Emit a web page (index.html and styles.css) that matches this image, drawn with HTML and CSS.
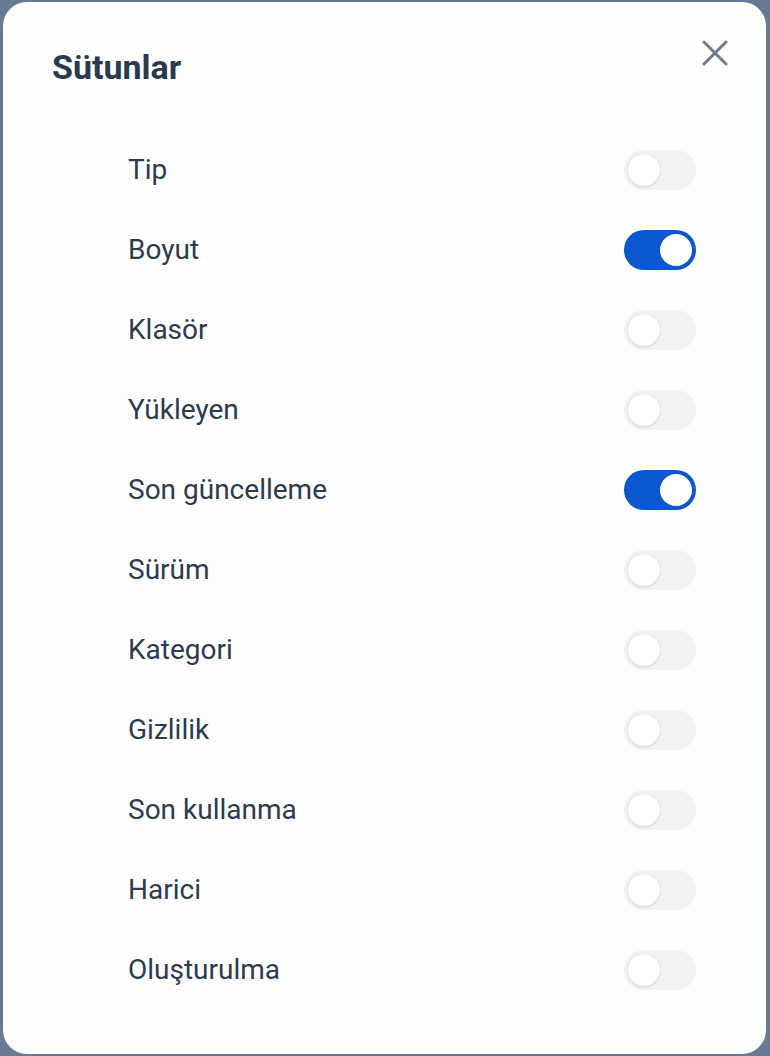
FILE: index.html
```html
<!DOCTYPE html>
<html lang="tr">
<head>
<meta charset="utf-8">
<link rel="stylesheet" href="styles.css">
</head>
<body>
<div class="modal">
  <div class="header">
    <h2 class="title">Sütunlar</h2>
    <button class="close" aria-label="Kapat">
      <svg width="26" height="26" viewBox="0 0 26 26"><path d="M2 2 L24 24 M24 2 L2 24" stroke="#6b7a90" stroke-width="3" stroke-linecap="round"/></svg>
    </button>
  </div>
  <ul class="list">
    <li class="row"><span class="label">Tip</span><span class="toggle"><span class="knob"></span></span></li>
    <li class="row"><span class="label">Boyut</span><span class="toggle on"><span class="knob"></span></span></li>
    <li class="row"><span class="label">Klasör</span><span class="toggle"><span class="knob"></span></span></li>
    <li class="row"><span class="label">Yükleyen</span><span class="toggle"><span class="knob"></span></span></li>
    <li class="row"><span class="label">Son güncelleme</span><span class="toggle on"><span class="knob"></span></span></li>
    <li class="row"><span class="label">Sürüm</span><span class="toggle"><span class="knob"></span></span></li>
    <li class="row"><span class="label">Kategori</span><span class="toggle"><span class="knob"></span></span></li>
    <li class="row"><span class="label">Gizlilik</span><span class="toggle"><span class="knob"></span></span></li>
    <li class="row"><span class="label">Son kullanma</span><span class="toggle"><span class="knob"></span></span></li>
    <li class="row"><span class="label">Harici</span><span class="toggle"><span class="knob"></span></span></li>
    <li class="row"><span class="label">Oluşturulma</span><span class="toggle"><span class="knob"></span></span></li>
  </ul>
</div>
</body>
</html>
```
FILE: styles.css
```css
html, body {
  margin: 0;
  padding: 0;
}
body {
  background: #667a94;
  height: 1056px;
  box-sizing: border-box;
  padding: 2px 4px 2px 3px;
  font-family: Roboto, "Noto Sans", sans-serif;
  overflow: hidden;
}
.modal {
  background: #fdfdfd;
  border-radius: 24px;
  height: 1052px;
  box-sizing: border-box;
  padding: 0 0 0 49px;
}
.header {
  display: flex;
  justify-content: space-between;
  align-items: flex-start;
  padding-right: 38px;
}
.title {
  margin: 45px 0 0;
  font-size: 34px;
  line-height: 40px;
  font-weight: 700;
  color: #2c3a51;
}
.close {
  margin-top: 38px;
  background: none;
  border: 0;
  padding: 0;
  width: 26px;
  height: 26px;
  cursor: pointer;
}
.close svg { display: block; }
.list {
  list-style: none;
  margin: 43px 0 0;
  padding: 0 70px 0 76px;
}
.row {
  display: flex;
  justify-content: space-between;
  align-items: center;
  height: 80px;
}
.label {
  font-size: 28px;
  line-height: 34px;
  color: #2d3a4f;
}
.toggle {
  position: relative;
  width: 72px;
  height: 40px;
  border-radius: 20px;
  background: #f2f2f2;
}
.toggle .knob {
  position: absolute;
  top: 4px;
  left: 4px;
  width: 32px;
  height: 32px;
  border-radius: 50%;
  background: #ffffff;
  box-shadow: 0 1px 3px rgba(0,0,0,0.12), 0 0 1px rgba(0,0,0,0.08);
}
.toggle.on {
  background: #0b57d0;
}
.toggle.on .knob {
  left: 36px;
  box-shadow: none;
}
```
